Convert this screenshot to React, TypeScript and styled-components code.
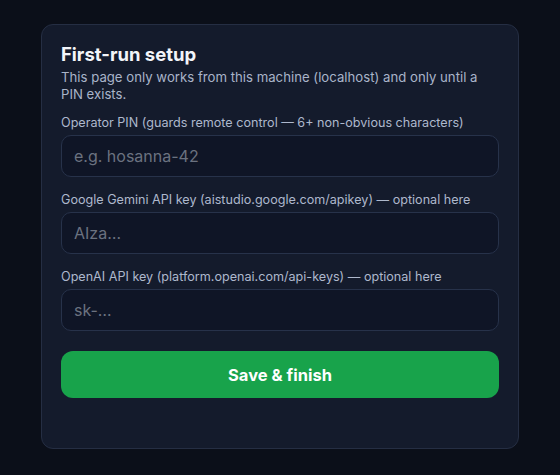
import React, { useState } from 'react';
import styled, { createGlobalStyle } from 'styled-components';

const GlobalStyle = createGlobalStyle`
  html, body {
    margin: 0;
    padding: 0;
    background: #0b0f19;
    font-family: Inter, "Noto Sans", sans-serif;
  }
`;

type Field = {
  key: string;
  label: string;
  placeholder: string;
};

const fields: Field[] = [
  { key: 'pin', label: 'Operator PIN (guards remote control — 6+ non-obvious characters)', placeholder: 'e.g. hosanna-42' },
  { key: 'gemini', label: 'Google Gemini API key (aistudio.google.com/apikey) — optional here', placeholder: 'AIza…' },
  { key: 'openai', label: 'OpenAI API key (platform.openai.com/api-keys) — optional here', placeholder: 'sk-…' },
];

export const Setup = () => {
  const [values, setValues] = useState<Record<string, string>>({});

  const update = (key: string, value: string) => setValues({ ...values, [key]: value });

  return (
    <>
      <GlobalStyle />
      <Page>
        <Card>
          <Title>First-run setup</Title>
          <Subtitle>This page only works from this machine (localhost) and only until a PIN exists.</Subtitle>
          <Form onSubmit={e => e.preventDefault()}>
            {fields.map(field => (
              <FieldRow key={field.key}>
                <Label htmlFor={field.key}>{field.label}</Label>
                <Input
                  id={field.key}
                  placeholder={field.placeholder}
                  value={values[field.key] || ''}
                  onChange={e => update(field.key, e.target.value)}
                />
              </FieldRow>
            ))}
            <SubmitButton type="submit">Save &amp; finish</SubmitButton>
          </Form>
        </Card>
      </Page>
    </>
  );
};

const Page = styled.div`
  display: flex;
  justify-content: center;
  align-items: flex-start;
  padding-top: 24px;
  min-height: 475px;
  box-sizing: border-box;
`;

const Card = styled.div`
  width: 478px;
  box-sizing: border-box;
  padding: 18px 19px 50px;
  background: #141b2c;
  border: 1px solid #252e43;
  border-radius: 12px;
`;

const Title = styled.h2`
  margin: 0;
  font-size: 18.5px;
  line-height: 22px;
  font-weight: 700;
  color: #f3f5f9;
`;

const Subtitle = styled.p`
  margin: 4px 0 0;
  font-size: 13.2px;
  line-height: 17px;
  color: #a9b4c9;
`;

const Form = styled.form`
  display: flex;
  flex-direction: column;
  margin-top: 12px;
`;

const FieldRow = styled.div`
  display: flex;
  flex-direction: column;
  gap: 4px;
  margin-bottom: 15px;
`;

const Label = styled.label`
  font-size: 12.6px;
  line-height: 16px;
  color: #aeb8cc;
`;

const Input = styled.input`
  height: 42px;
  box-sizing: border-box;
  padding: 0 12px;
  background: #0f1526;
  border: 1px solid #27324a;
  border-radius: 10px;
  color: #e5e9f0;
  font-family: inherit;
  font-size: 16px;
  outline: none;

  &::placeholder {
    color: #6b7280;
  }
`;

const SubmitButton = styled.button`
  margin-top: 5px;
  height: 47px;
  border: none;
  border-radius: 12px;
  background: #18a34b;
  color: #ffffff;
  font-family: inherit;
  font-size: 16.5px;
  font-weight: 700;
  cursor: pointer;
`;

export default Setup;
